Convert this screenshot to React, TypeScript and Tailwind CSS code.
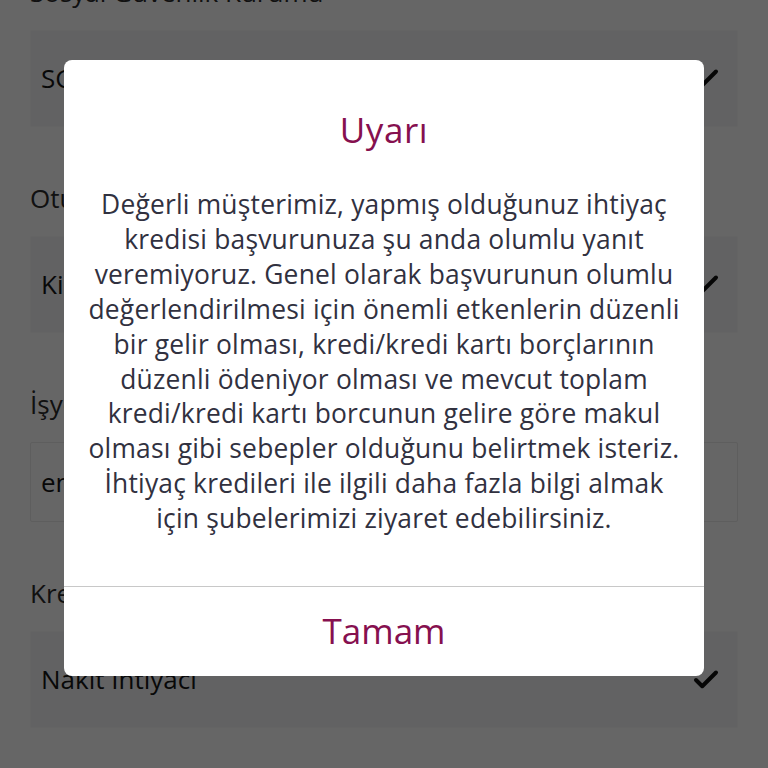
import React from 'react';
import { Check } from 'lucide-react';

const font = { fontFamily: '"Open Sans", "Noto Sans", sans-serif', fontVariantLigatures: 'none' as const };

const lines = [
  'Değerli müşterimiz, yapmış olduğunuz ihtiyaç',
  'kredisi başvurunuza şu anda olumlu yanıt',
  'veremiyoruz. Genel olarak başvurunun olumlu',
  'değerlendirilmesi için önemli etkenlerin düzenli',
  'bir gelir olması, kredi/kredi kartı borçlarının',
  'düzenli ödeniyor olması ve mevcut toplam',
  'kredi/kredi kartı borcunun gelire göre makul',
  'olması gibi sebepler olduğunu belirtmek isteriz.',
  'İhtiyaç kredileri ile ilgili daha fazla bilgi almak',
  'için şubelerimizi ziyaret edebilirsiniz.',
];

function Field({ label, value, select = true, height = 'h-[97px]' }: { label: string; value: string; select?: boolean; height?: string }) {
  return (
    <div className="mt-[56px] first:mt-0">
      <div className="h-[30px] leading-[30px] text-[26px] text-[#2b2b2b] mb-[23px]">{label}</div>
      <div
        className={`${height} flex items-center justify-between px-[10px] rounded-[2px] border ${
          select ? 'bg-[#f4f5f7] border-[#fafafa]' : 'bg-white border-[#ececec]'
        }`}
      >
        <span className="text-[26px] text-[#151515]">{value}</span>
        {select && <Check className="w-[30px] h-[30px] mr-[6px] text-[#111]" strokeWidth={3.2} />}
      </div>
    </div>
  );
}

export default function App() {
  return (
    <div className="relative w-[768px] h-[768px] overflow-hidden bg-white" style={font}>
      {/* form behind the dialog */}
      <div className="px-[30px] -mt-[23px]">
        <Field label="Sosyal Güvenlik Kurumu" value="SGK" />
        <Field label="Oturduğunuz Ev" value="Kiracı" />
        <Field label="İşyeri Sektörü" value="en" select={false} height="h-[80px]" />
        <Field label="Kredi Amacı" value="Nakit İhtiyacı" />
      </div>

      {/* overlay + dialog */}
      <div className="absolute inset-0 bg-black/60 flex justify-center pt-[60px]">
        <div className="w-[640px] h-[616px] bg-white rounded-[8px] flex flex-col overflow-hidden">
          <div className="flex-1 flex flex-col items-center pt-[50px]">
            <h2 className="h-[40px] leading-[40px] text-[35px] tracking-[0.6px] text-[#86104f]">Uyarı</h2>
            <div className="mt-[37px] text-center text-[26.4px] leading-[34.9px] tracking-[0.2px] text-[#31313f]">
              {lines.map((l, i) => (
                <div key={i} className="whitespace-nowrap">{l}</div>
              ))}
            </div>
          </div>
          <button className="h-[90px] border-t border-[#c8c8c8] text-[35px] text-[#86104f]">Tamam</button>
        </div>
      </div>
    </div>
  );
}
